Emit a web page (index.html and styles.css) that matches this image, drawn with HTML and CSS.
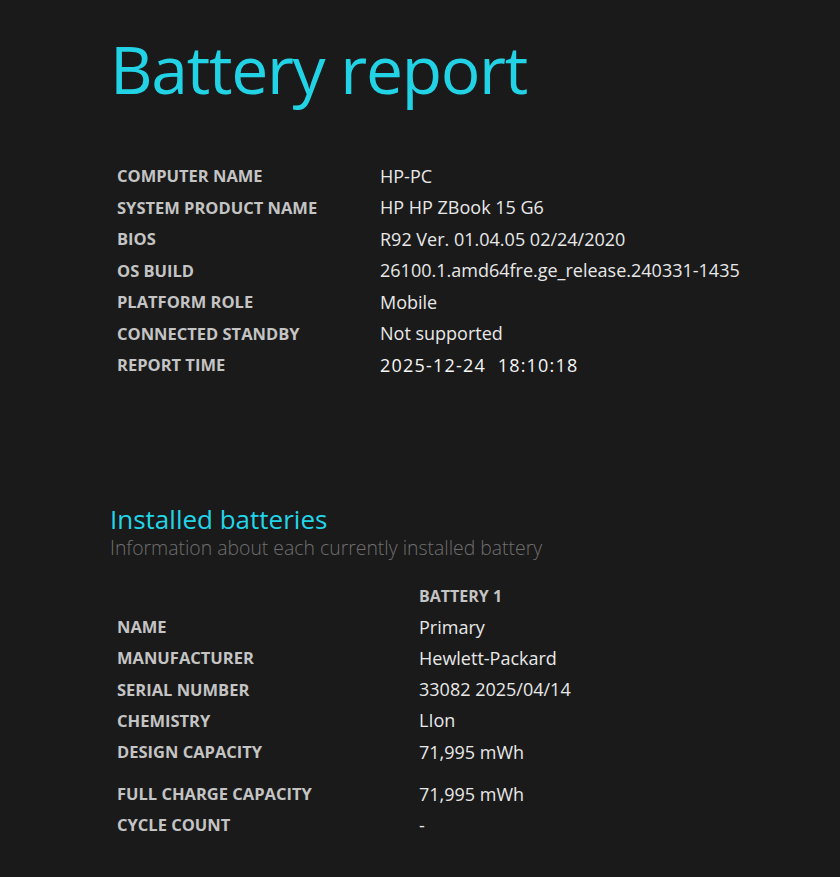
FILE: index.html
```html
<!DOCTYPE html>
<html lang="en">
<head>
<meta charset="utf-8">
<title>Battery report</title>
<link rel="stylesheet" href="styles.css">
</head>
<body>
<main class="page">
  <h1 class="title">Battery report</h1>
  <table class="info">
    <tr><td class="label">COMPUTER NAME</td><td class="value">HP-PC</td></tr>
    <tr><td class="label">SYSTEM PRODUCT NAME</td><td class="value">HP HP ZBook 15 G6</td></tr>
    <tr><td class="label">BIOS</td><td class="value">R92 Ver. 01.04.05 02/24/2020</td></tr>
    <tr><td class="label">OS BUILD</td><td class="value">26100.1.amd64fre.ge_release.240331-1435</td></tr>
    <tr><td class="label">PLATFORM ROLE</td><td class="value">Mobile</td></tr>
    <tr><td class="label">CONNECTED STANDBY</td><td class="value">Not supported</td></tr>
    <tr><td class="label">REPORT TIME</td><td class="value date">2025-12-24&nbsp;&nbsp;18:10:18</td></tr>
  </table>

  <section class="section">
    <h2 class="section-title">Installed batteries</h2>
    <p class="section-sub">Information about each currently installed battery</p>
    <table class="batteries">
      <tr class="head"><td class="label"></td><td class="col-head">BATTERY 1</td></tr>
      <tr><td class="label">NAME</td><td class="value">Primary</td></tr>
      <tr><td class="label">MANUFACTURER</td><td class="value">Hewlett-Packard</td></tr>
      <tr><td class="label">SERIAL NUMBER</td><td class="value">33082 2025/04/14</td></tr>
      <tr><td class="label">CHEMISTRY</td><td class="value">LIon</td></tr>
      <tr class="spaced"><td class="label">DESIGN CAPACITY</td><td class="value">71,995 mWh</td></tr>
      <tr><td class="label">FULL CHARGE CAPACITY</td><td class="value">71,995 mWh</td></tr>
      <tr><td class="label">CYCLE COUNT</td><td class="value">-</td></tr>
    </table>
  </section>
</main>
</body>
</html>
```
FILE: styles.css
```css
html, body {
  margin: 0;
  padding: 0;
  background: #1a1a1a;
}
body {
  font-family: "Open Sans", "Noto Sans", sans-serif;
  color: #e6e6e6;
  height: 877px;
  overflow: hidden;
}
.page {
  padding: 0 0 0 110px;
}
.title {
  margin: 0;
  padding-top: 22px;
  font-size: 66px;
  font-weight: 400;
  color: #22d3e6;
  line-height: 92px;
  letter-spacing: -1.3px;
}
.info, .batteries {
  border-collapse: collapse;
  margin-left: 5px;
}
.info {
  margin-top: 46px;
}
.info td, .batteries td {
  padding: 0 0 0 2px;
  height: 31.5px;
  vertical-align: middle;
}
.batteries td {
  height: 31.25px;
}
.label {
  font-size: 16.5px;
  font-weight: 700;
  color: #c4c4c4;
  width: 261px;
}
.value {
  font-size: 18px;
  font-weight: 400;
  color: #e8e8e8;
}
.value.date {
  font-weight: 500;
  color: #f6f6f6;
  letter-spacing: 1.2px;
}
.section {
  margin-top: 123px;
}
.section-title {
  margin: 0;
  font-size: 26px;
  font-weight: 500;
  color: #22d5e8;
  line-height: 30px;
}
.section-sub {
  margin: 0;
  font-size: 19.4px;
  font-weight: 300;
  color: #6f6f6f;
  line-height: 28px;
}
.batteries {
  margin-top: 20px;
}
.batteries .label {
  width: 300px;
}
.batteries tr.head td {
  height: 29.5px;
}
.col-head {
  font-size: 16px;
  font-weight: 700;
  color: #c4c4c4;
}
.batteries tr.spaced td {
  height: 31px;
  padding-bottom: 11px;
}
```
